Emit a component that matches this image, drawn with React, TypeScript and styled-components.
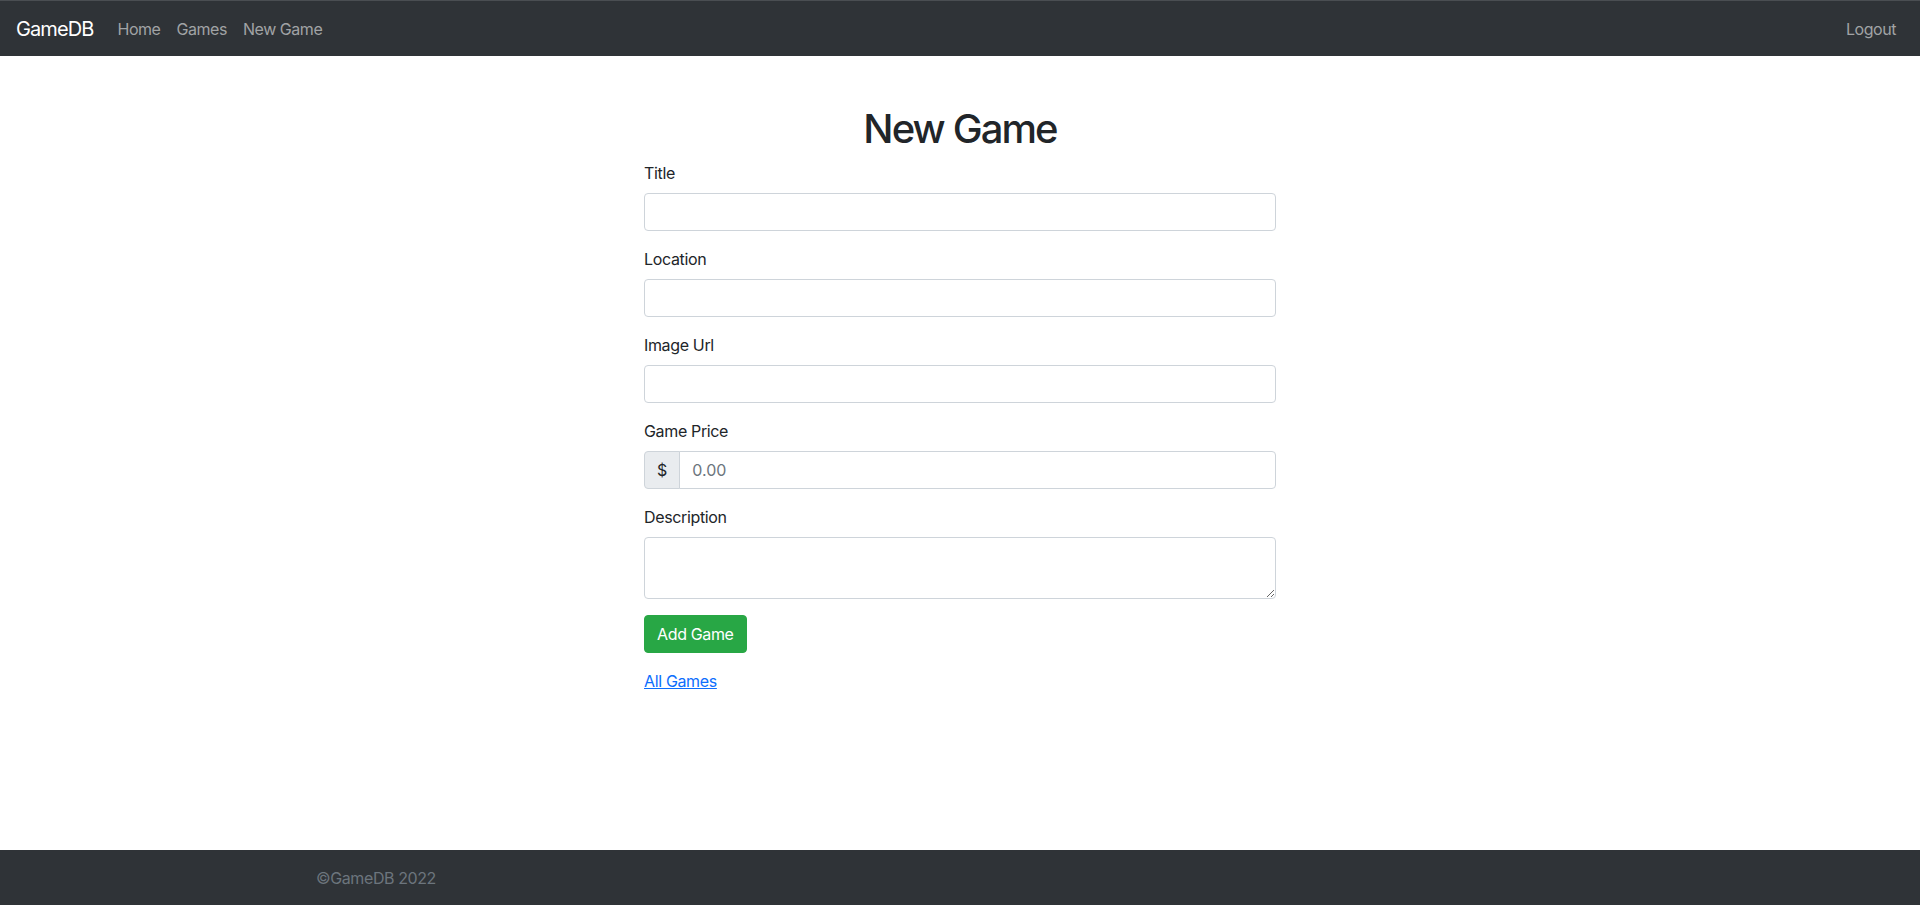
import React from "react";
import styled, { createGlobalStyle } from "styled-components";

const GlobalStyle = createGlobalStyle`
  *, *::before, *::after { box-sizing: border-box; }
  html, body { margin: 0; padding: 0; }
  body {
    font-family: Inter, "Noto Sans", "Liberation Sans", sans-serif;
    font-size: 16px;
    line-height: 1.5;
    color: #212529;
    background: #fff;
  }
`;

const Page = styled.div`
  min-height: 100vh;
  display: flex;
  flex-direction: column;
`;

const Navbar = styled.nav`
  height: 56px;
  background: #2f3337;
  border-top: 1px solid #4a4e52;
  display: flex;
  align-items: center;
  padding: 0 16px;
`;

const Brand = styled.a`
  color: #fff;
  font-size: 20px;
  line-height: 30px;
  margin-right: 16px;
  text-decoration: none;
  letter-spacing: -0.9px;
`;

const NavList = styled.div`
  display: flex;
  align-items: center;
  flex: 1;
`;

const NavLink = styled.a<{ $end?: boolean }>`
  color: #a1a3a5;
  font-size: 16px;
  line-height: 24px;
  padding: 8px;
  text-decoration: none;
  letter-spacing: -0.45px;
  margin-left: ${(p) => (p.$end ? "auto" : "0")};
`;

const Main = styled.main`
  flex: 1;
  padding-top: 49px;
`;

const FormWrap = styled.div`
  width: 632px;
  margin: 0 auto;
`;

const Heading = styled.h1`
  margin: 0 0 8px;
  text-align: center;
  font-size: 40px;
  font-weight: 500;
  line-height: 1.2;
  letter-spacing: -1.9px;
  color: #212529;
`;

const Field = styled.div`
  margin-bottom: 16px;
`;

const Label = styled.label`
  display: block;
  margin-bottom: 8px;
  font-size: 16px;
  line-height: 24px;
  letter-spacing: -0.35px;
`;

const Input = styled.input`
  display: block;
  width: 100%;
  height: 38px;
  padding: 6px 12px;
  font: inherit;
  font-size: 16px;
  line-height: 24px;
  color: #212529;
  background: #fff;
  border: 1px solid #ced4da;
  border-radius: 4px;
  outline: none;
  &::placeholder { color: #6c757d; }
`;

const InputGroup = styled.div`
  display: flex;
  align-items: stretch;
  width: 100%;
`;

const Addon = styled.span`
  display: flex;
  align-items: center;
  padding: 6px 12px;
  font-size: 16px;
  line-height: 24px;
  color: #212529;
  background: #e9ecef;
  border: 1px solid #ced4da;
  border-radius: 4px 0 0 4px;
`;

const GroupInput = styled(Input)`
  flex: 1;
  min-width: 0;
  margin-left: -1px;
  border-radius: 0 4px 4px 0;
`;

const TextArea = styled.textarea`
  display: block;
  width: 100%;
  height: 62px;
  padding: 6px 12px;
  font: inherit;
  font-size: 16px;
  line-height: 24px;
  color: #212529;
  border: 1px solid #ced4da;
  border-radius: 4px;
  outline: none;
  resize: vertical;
`;

const Button = styled.button`
  display: inline-block;
  height: 38px;
  padding: 6px 12px;
  font: inherit;
  font-size: 16px;
  line-height: 24px;
  color: #fff;
  background: #28a745;
  border: 1px solid #28a745;
  border-radius: 4px;
  cursor: pointer;
  margin-bottom: 16px;
  letter-spacing: -0.35px;
`;

const TextLink = styled.a`
  display: inline-block;
  color: #0d6efd;
  text-decoration: underline;
  font-size: 16px;
  line-height: 24px;
  letter-spacing: -0.35px;
`;

const Footer = styled.footer`
  background: #2f3337;
  padding: 16px 0 15px;
`;

const FooterInner = styled.div`
  max-width: 1320px;
  margin: 0 auto;
  padding: 0 12px 0 16px;
  color: #6c757d;
  font-size: 16px;
  line-height: 24px;
  letter-spacing: -0.4px;
`;

export default function App() {
  return (
    <>
      <GlobalStyle />
      <Page>
        <Navbar>
          <Brand href="#">GameDB</Brand>
          <NavList>
            <NavLink href="#">Home</NavLink>
            <NavLink href="#">Games</NavLink>
            <NavLink href="#">New Game</NavLink>
            <NavLink href="#" $end>Logout</NavLink>
          </NavList>
        </Navbar>
        <Main>
          <FormWrap>
            <Heading>New Game</Heading>
            <form onSubmit={(e) => e.preventDefault()}>
              <Field>
                <Label htmlFor="title">Title</Label>
                <Input id="title" type="text" />
              </Field>
              <Field>
                <Label htmlFor="location">Location</Label>
                <Input id="location" type="text" />
              </Field>
              <Field>
                <Label htmlFor="image">Image Url</Label>
                <Input id="image" type="text" />
              </Field>
              <Field>
                <Label htmlFor="price">Game Price</Label>
                <InputGroup>
                  <Addon>$</Addon>
                  <GroupInput id="price" type="text" placeholder="0.00" />
                </InputGroup>
              </Field>
              <Field>
                <Label htmlFor="description">Description</Label>
                <TextArea id="description" rows={2} />
              </Field>
              <Button type="submit">Add Game</Button>
            </form>
            <TextLink href="#">All Games</TextLink>
          </FormWrap>
        </Main>
        <Footer>
          <FooterInner>©GameDB 2022</FooterInner>
        </Footer>
      </Page>
    </>
  );
}
